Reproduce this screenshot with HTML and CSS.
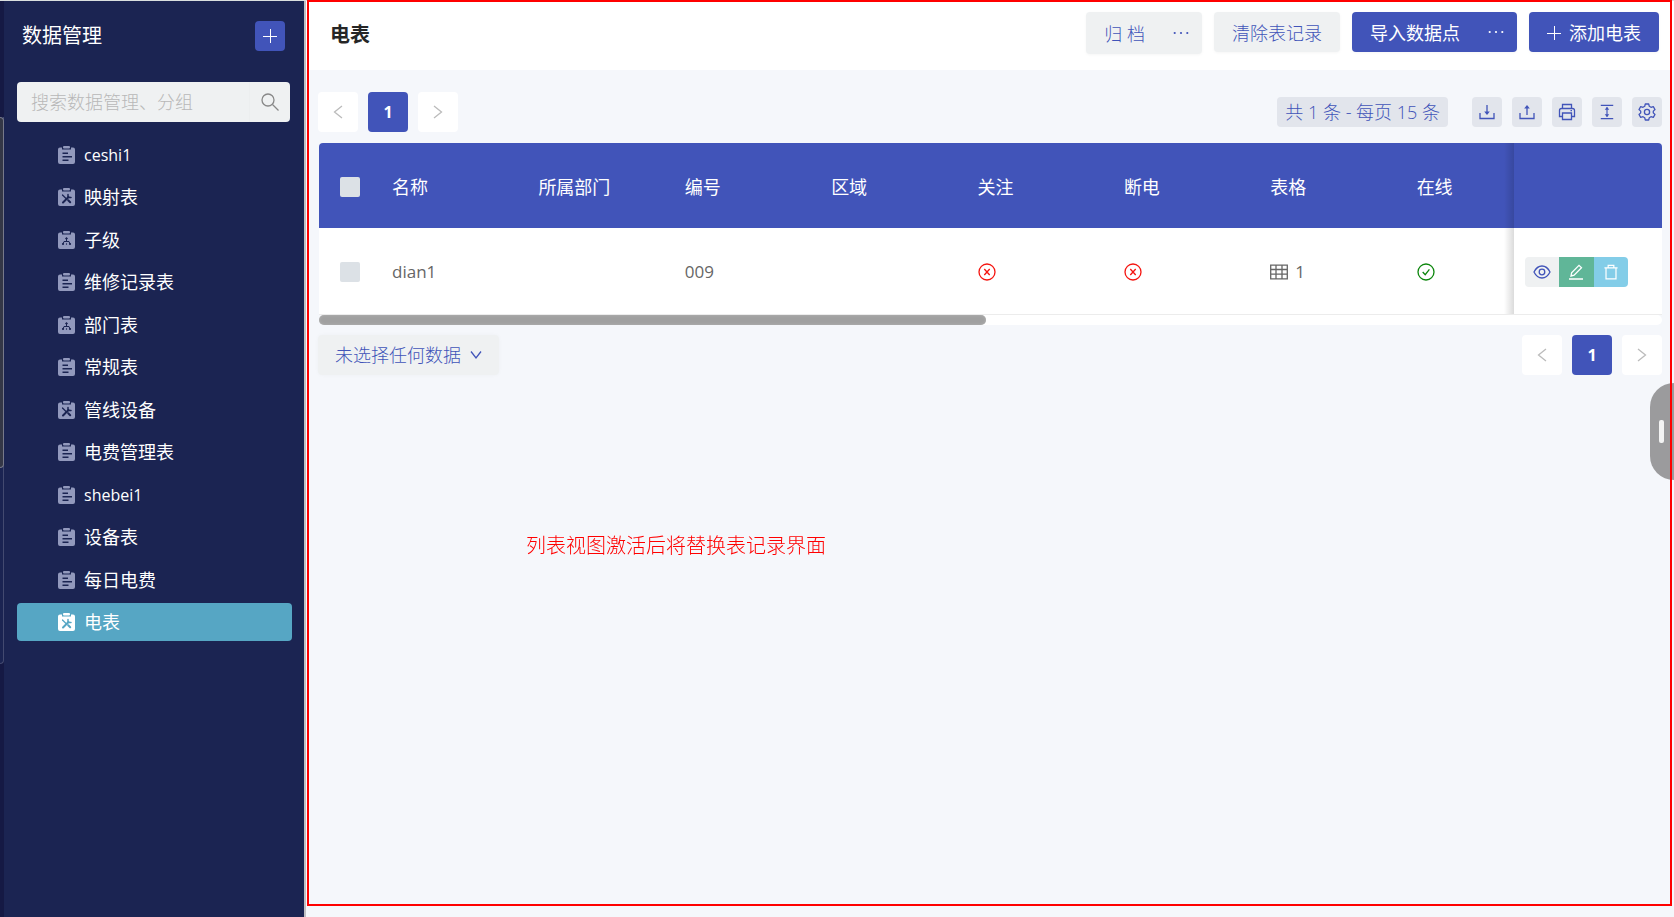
FILE: index.html
```html
<!DOCTYPE html>
<html lang="zh-CN">
<head>
<meta charset="utf-8">
<title>电表</title>
<link rel="stylesheet" href="styles.css">
</head>
<body>
<svg class="sprite" aria-hidden="true">
  <symbol id="i-form" viewBox="0 0 17 18"><path fill-rule="evenodd" d="M2 1.500h2v2h9v-2h2a2 2 0 0 1 2 2V16a2 2 0 0 1-2 2H2a2 2 0 0 1-2-2V3.500a2 2 0 0 1 2-2zM4.500 6.500v1.500H10V6.500zM4.500 10v1.500H14V10zM4.500 13.500V15h6v-1.500z"/><rect x="5" y="0" width="7" height="2.600" rx="1"/></symbol>
  <symbol id="i-tool" viewBox="0 0 17 18"><path d="M2 1.500h2v2h9v-2h2a2 2 0 0 1 2 2V16a2 2 0 0 1-2 2H2a2 2 0 0 1-2-2V3.500a2 2 0 0 1 2-2z"/><rect x="5" y="0" width="7" height="2.600" rx="1"/><g class="cut" fill="none" stroke-linecap="round"><path stroke-width="1.200" d="M4.500 7l4 4"/><path stroke-width="2" d="M10.200 12.200l2 2M5 14.500l5.500-5.500"/><path stroke-width="1.500" d="M10 6.500v3h3"/></g></symbol>
  <symbol id="i-tree" viewBox="0 0 17 18"><path d="M2 1.500h2v2h9v-2h2a2 2 0 0 1 2 2V16a2 2 0 0 1-2 2H2a2 2 0 0 1-2-2V3.500a2 2 0 0 1 2-2z"/><rect x="5" y="0" width="7" height="2.600" rx="1"/><g class="cut"><path fill="none" stroke-width="1" d="M8.500 8v3M5 13l1-2.500h5l1 2.500"/><circle cx="8.500" cy="7.500" r=".8"/><circle cx="5" cy="13" r=".7"/><circle cx="8.500" cy="13" r=".3"/><circle cx="12" cy="13" r=".7"/></g></symbol>
  <symbol id="i-plus" viewBox="0 0 14 14"><path class="ln thin" d="M7.500 0v14M0 7.500h14"/></symbol>
  <symbol id="i-left" viewBox="0 0 10 14"><path class="ln" d="M9 1L1.500 7 9 13"/></symbol>
  <symbol id="i-right" viewBox="0 0 10 14"><path class="ln" d="M1 1l7.500 6L1 13"/></symbol>
  <symbol id="i-down" viewBox="0 0 12 10"><path class="ln" d="M1 1.500L6 8l5-6.500"/></symbol>
  <symbol id="i-search" viewBox="0 0 18 18"><circle class="ln" cx="7" cy="7" r="6"/><path class="ln" d="M11.500 11.500l6 6"/></symbol>
  <symbol id="i-more" viewBox="0 0 16 4"><circle cx="1.700" cy="2" r="1.100"/><circle cx="8" cy="2" r="1.100"/><circle cx="14.300" cy="2" r="1.100"/></symbol>
  <symbol id="i-import" viewBox="0 0 16 16"><path class="ln" d="M1 9v5.500h14V9M8 1v9"/><path d="M5.200 7.500h5.600L8 11z"/></symbol>
  <symbol id="i-export" viewBox="0 0 16 16"><path class="ln" d="M1 9v5.500h14V9M8 3v8"/><path d="M5.200 4.500h5.600L8 1z"/></symbol>
  <symbol id="i-print" viewBox="0 0 18 18"><path class="ln" d="M4.500 5.500V1.500h9v4M4.500 13.500h-3v-6q0-2 2-2h11q2 0 2 2v6h-3M4.500 10h9v6.500h-9zM12.500 7.700h1.500"/></symbol>
  <symbol id="i-height" viewBox="0 0 16 18"><path class="ln" d="M1 1.500h14M1 16.500h14M8 4v10"/><path d="M5.500 6.500h5L8 3zM5.500 11.500h5L8 15z"/></symbol>
  <symbol id="i-gear" viewBox="0 0 18 18"><path class="ln" stroke-linejoin="round" d="M7.300 1h3.400l.6 2.300 1.700 1 2.300-.7L17 6.500l-1.700 1.600v1.800L17 11.500l-1.700 2.900-2.300-.7-1.700 1-.6 2.300H7.300l-.6-2.300-1.700-1-2.300.7L1 11.500l1.700-1.600V8.100L1 6.500l1.700-2.900 2.300.7 1.700-1z"/><circle class="ln" cx="9" cy="9" r="2.600"/></symbol>
  <symbol id="i-no" viewBox="0 0 18 18"><circle class="ln" cx="9" cy="9" r="8"/><path class="ln" d="M6.300 6l5.400 6M11.700 6l-5.400 6"/></symbol>
  <symbol id="i-yes" viewBox="0 0 18 18"><circle class="ln" cx="9" cy="9" r="8"/><path class="ln" d="M5.700 9l2.500 2.700 4.200-5.400"/></symbol>
  <symbol id="i-grid" viewBox="0 0 18 15"><path class="ln" d="M.7.700h16.600v13.600H.7zM.7 5h16.600M.7 9.700h16.600M6 .7v13.600M12 .7v13.600"/></symbol>
  <symbol id="i-eye" viewBox="0 0 18 14"><path class="ln" d="M1 7q3-6 8-6t8 6q-3 6-8 6T1 7z"/><circle class="ln" cx="9" cy="7" r="2.800"/></symbol>
  <symbol id="i-edit" viewBox="0 0 16 16"><path class="ln" d="M1 15h14M3 12l.6-3.200L11 1.300l2.500 2.500-7.400 7.400z"/></symbol>
  <symbol id="i-trash" viewBox="0 0 16 17"><path class="ln" d="M1 4h14M5 4V1.500h6V4M2.700 4v11.700h10.600V4"/></symbol>
</svg>

<div class="app">
  <div class="rail"><span class="rail-track"></span><span class="rail-thumb"></span></div>

  <aside class="sidebar">
    <div class="side-head">
      <h2 class="side-title">数据管理</h2>
      <button class="add-btn" type="button" aria-label="新增"><svg class="s14"><use href="#i-plus"/></svg></button>
    </div>
    <form class="search">
      <input class="search-input" type="text" aria-label="搜索" placeholder="搜索数据管理、分组">
      <button class="search-btn" type="button" aria-label="搜索"><svg class="s18"><use href="#i-search"/></svg></button>
    </form>
    <nav class="menu">
      <a class="item latin" href="#"><svg class="mi"><use href="#i-form"/></svg>ceshi1</a>
      <a class="item" href="#"><svg class="mi"><use href="#i-tool"/></svg>映射表</a>
      <a class="item" href="#"><svg class="mi"><use href="#i-tree"/></svg>子级</a>
      <a class="item" href="#"><svg class="mi"><use href="#i-form"/></svg>维修记录表</a>
      <a class="item" href="#"><svg class="mi"><use href="#i-tree"/></svg>部门表</a>
      <a class="item" href="#"><svg class="mi"><use href="#i-form"/></svg>常规表</a>
      <a class="item" href="#"><svg class="mi"><use href="#i-tool"/></svg>管线设备</a>
      <a class="item" href="#"><svg class="mi"><use href="#i-form"/></svg>电费管理表</a>
      <a class="item latin" href="#"><svg class="mi"><use href="#i-form"/></svg>shebei1</a>
      <a class="item" href="#"><svg class="mi"><use href="#i-form"/></svg>设备表</a>
      <a class="item" href="#"><svg class="mi"><use href="#i-form"/></svg>每日电费</a>
      <a class="item active" href="#"><svg class="mi"><use href="#i-tool"/></svg>电表</a>
    </nav>
  </aside>

  <main class="main">
    <header class="topbar">
      <h1 class="page-title">电表</h1>
      <div class="actions">
        <div class="split light tall">
          <button class="btn" type="button">归 档</button>
          <button class="btn more" type="button" aria-label="更多"><svg class="dots"><use href="#i-more"/></svg></button>
        </div>
        <div class="split light"><button class="btn" type="button">清除表记录</button></div>
        <div class="split primary">
          <button class="btn" type="button">导入数据点</button>
          <button class="btn more" type="button" aria-label="更多"><svg class="dots"><use href="#i-more"/></svg></button>
        </div>
        <div class="split primary"><button class="btn" type="button"><svg class="s14"><use href="#i-plus"/></svg>添加电表</button></div>
      </div>
    </header>

    <section class="content">
      <div class="bar">
        <div class="pager">
          <button class="page" type="button" aria-label="上一页"><svg class="arrow"><use href="#i-left"/></svg></button>
          <button class="page current" type="button">1</button>
          <button class="page" type="button" aria-label="下一页"><svg class="arrow"><use href="#i-right"/></svg></button>
        </div>
        <div class="tools">
          <button class="tool info" type="button">共 1 条 - 每页 15 条</button>
          <button class="tool" type="button" aria-label="导入"><svg class="s16"><use href="#i-import"/></svg></button>
          <button class="tool" type="button" aria-label="导出"><svg class="s16"><use href="#i-export"/></svg></button>
          <button class="tool" type="button" aria-label="打印"><svg class="s18"><use href="#i-print"/></svg></button>
          <button class="tool" type="button" aria-label="行高"><svg class="s16"><use href="#i-height"/></svg></button>
          <button class="tool" type="button" aria-label="设置"><svg class="s18"><use href="#i-gear"/></svg></button>
        </div>
      </div>

      <div class="table-box">
        <table class="grid">
          <colgroup><col class="c-check"><col class="c"><col class="c"><col class="c"><col class="c"><col class="c"><col class="c"><col class="c"><col><col class="c-ops"></colgroup>
          <thead>
            <tr><th class="check"><input class="box" type="checkbox" aria-label="全选"></th><th>名称</th><th>所属部门</th><th>编号</th><th>区域</th><th>关注</th><th>断电</th><th>表格</th><th class="edge">在线</th><th></th></tr>
          </thead>
          <tbody>
            <tr>
              <td class="check"><input class="box" type="checkbox" aria-label="选择 dian1"></td>
              <td>dian1</td><td></td><td>009</td><td></td>
              <td><svg class="s18 red"><use href="#i-no"/></svg></td>
              <td><svg class="s18 red"><use href="#i-no"/></svg></td>
              <td><span class="count"><svg class="s18"><use href="#i-grid"/></svg>1</span></td>
              <td class="edge"><svg class="s18 green"><use href="#i-yes"/></svg></td>
              <td><div class="ops">
                <button class="op view" type="button" aria-label="查看"><svg class="s18"><use href="#i-eye"/></svg></button>
                <button class="op edit" type="button" aria-label="编辑"><svg class="s16"><use href="#i-edit"/></svg></button>
                <button class="op del" type="button" aria-label="删除"><svg class="s16"><use href="#i-trash"/></svg></button>
              </div></td>
            </tr>
          </tbody>
        </table>
        <div class="hscroll"><div class="thumb"></div></div>
      </div>

      <div class="bar foot">
        <button class="select" type="button">未选择任何数据<svg class="chev"><use href="#i-down"/></svg></button>
        <div class="pager">
          <button class="page" type="button" aria-label="上一页"><svg class="arrow"><use href="#i-left"/></svg></button>
          <button class="page current" type="button">1</button>
          <button class="page" type="button" aria-label="下一页"><svg class="arrow"><use href="#i-right"/></svg></button>
        </div>
      </div>
    </section>
  </main>
</div>

<div class="handle"><span class="grip"></span></div>
<div class="frame"><p class="note">列表视图激活后将替换表记录界面</p></div>
</body>
</html>
```
FILE: styles.css
```css
* { box-sizing: border-box; }
body {
  margin: 0;
  font: 300 18px/24px "Open Sans", "Noto Sans CJK SC", sans-serif;
  color: #666;
  background: #f5f7fb;
}
button, input { font: inherit; color: inherit; border: 0; padding: 0; margin: 0; background: none; }
h1, h2, p { margin: 0; }
svg { display: block; flex: none; fill: currentColor; }
.ln { fill: none; stroke: currentColor; stroke-width: 1.3; }
.thin { stroke-width: 1; }
.sprite { position: absolute; width: 0; height: 0; }
.s14 { width: 14px; height: 14px; }
.s16 { width: 16px; height: 16px; }
.s18 { width: 18px; height: 18px; }
.dots { width: 16px; height: 4px; }
.arrow { width: 10px; height: 14px; }
.chev { width: 12px; height: 10px; }

.app { display: flex; min-height: 100vh; border-top: 1px solid #dadfdf; }

.rail { position: relative; width: 4px; background: #151944; }
.rail-track, .rail-thumb { position: absolute; left: 0; width: 4px; border-right: 1px solid #434a70; }
.rail-track { top: 116px; height: 547px; border-bottom: 1px solid #434a70; border-radius: 0 0 4px 0; background: #1b2452; }
.rail-thumb { top: 116px; height: 351px; background: #343747; border-color: #77798a; border-top: 1px solid #77798a; border-bottom: 1px solid #77798a; border-radius: 0 4px 4px 0; }

.sidebar {
  width: 302px;
  flex: none;
  padding: 20px 12px 0 13px;
  background: #1b2452;
  color: #fff;
  border-right: 2px solid #bfbfc3;
}
.side-head { display: flex; justify-content: space-between; align-items: center; padding: 0 7px 0 5px; }
.side-title { font-size: 20px; line-height: 28px; font-weight: 400; }
.add-btn { width: 30px; height: 30px; display: grid; place-items: center; background: #4154b9; border-radius: 4px; }
.search { display: flex; height: 40px; margin: 31px 2px 14px 0; background: #eff1f2; border-radius: 4px; }
.search-input { flex: 1; min-width: 0; padding: 0 14px; outline: 0; color: #666; }
.search-input::placeholder { color: #b8b8b8; opacity: 1; }
.search-btn { width: 41px; display: grid; place-items: center; color: #888; border-left: 1px solid #eceeef; }
.menu { display: flex; flex-direction: column; justify-content: space-between; min-height: 505px; }
.item {
  --bg: #1b2452;
  display: flex;
  align-items: center;
  gap: 9px;
  height: 38px;
  padding-left: 41px;
  color: #fff;
  font-weight: 400;
  text-decoration: none;
  border-radius: 4px;
}
.latin { font-size: 16px; }
.mi { width: 17px; height: 18px; color: #9299bd; }
.cut { fill: var(--bg); stroke: var(--bg); }
.cut path { fill: none; }
.active { --bg: #56a6c4; background: #56a6c4; }
.active .mi { color: #fff; }

.main { flex: 1; min-width: 0; }
.topbar { display: flex; justify-content: space-between; align-items: flex-start; height: 69px; padding: 11px 15px 0 24px; background: #fff; }
.page-title { font-size: 20px; line-height: 24px; padding-top: 11px; font-weight: 700; color: #262626; }
.actions { display: flex; gap: 12px; align-items: flex-start; }
.split { display: flex; height: 40px; border-radius: 4px; box-shadow: 0 1px 3px rgba(0, 0, 0, .04); }
.tall { height: 42px; }
.light { background: #eff1f2; color: #4154b9; }
.primary { background: #4154b9; color: #fff; font-weight: 400; }
.btn { display: flex; align-items: center; gap: 8px; padding: 2px 18px 0; white-space: nowrap; }
.more { width: 39px; justify-content: center; padding: 0 3px 0 0; }

.content { padding: 22px 12px 0; }
.bar { display: flex; justify-content: space-between; align-items: center; }
.pager { display: flex; gap: 10px; }
.page { width: 40px; height: 40px; display: grid; place-items: center; border-radius: 4px; background: #fff; color: #bbb; }
.current { background: #4154b9; color: #fff; font-size: 16px; font-weight: 700; }
.tools { display: flex; gap: 10px; }
.tool { width: 30px; height: 30px; display: grid; place-items: center; border-radius: 4px; background: #e2e5ec; color: #4154b9; }
.info { width: auto; padding: 0 8px; margin-right: 14px; }

.table-box { margin: 11px 0 10px 1px; }
.grid { width: 100%; table-layout: fixed; border-collapse: separate; border-spacing: 0; background: #fff; border-radius: 4px 4px 0 0; overflow: hidden; }
.c-check { width: 62px; }
.c { width: 10.9%; }
.c-ops { width: 148px; }
th, td { padding: 2px 0 0 11px; text-align: left; vertical-align: middle; font-weight: 400; }
th { height: 85px; background-color: #4154b9; color: #fff; }
td { height: 87px; font-size: 17px; border-bottom: 1px solid #ececec; }
.check { padding-left: 21px; }
.box { display: block; appearance: none; width: 20px; height: 20px; border-radius: 2px; background: #dce1e6; }
.edge { background-image: linear-gradient(to right, transparent, rgba(0, 0, 0, .14)); background-size: 10px 100%; background-position: right; background-repeat: no-repeat; }
.red { color: #f5140f; }
.green { color: #0b860b; }
.count { display: flex; align-items: center; gap: 7px; }
.ops { display: flex; width: 103px; height: 30px; border-radius: 4px; overflow: hidden; }
.op { flex: 1; display: grid; place-items: center; color: #fff; }
.view { background: #eff1f2; color: #4154b9; }
.edit { background: #60b698; }
.del { background: #83cde8; }
.hscroll { height: 10px; background: #fff; border-radius: 5px; }
.thumb { width: 49.7%; height: 10px; border-radius: 5px; background: #a0a0a0; box-shadow: inset 0 0 3px #b5b5b5; }
.select { display: flex; align-items: center; gap: 9px; height: 40px; padding: 0 17px; color: #4154b9; background: #eff1f2; border-radius: 4px; box-shadow: 0 0 4px rgba(0, 0, 0, .03); }

.handle { position: fixed; right: 0; top: 383px; width: 24px; height: 97px; display: flex; align-items: center; padding-left: 9px; background: #9b9b9d; border-radius: 24px 0 0 24px; }
.grip { width: 5px; height: 23px; border-radius: 2px; background: #f3f3f3; }
.frame { position: fixed; inset: 0 2px 11px 307px; border: 2px solid #f00; pointer-events: none; }
.note { position: absolute; left: 217px; top: 530px; font-size: 20px; line-height: 28px; color: #f00; }
```
